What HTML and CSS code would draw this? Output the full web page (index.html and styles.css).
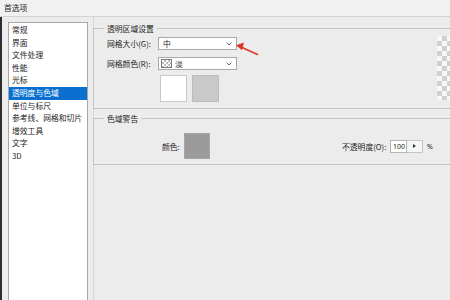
FILE: index.html
```html
<!DOCTYPE html>
<html lang="zh">
<head>
<meta charset="utf-8">
<title>首选项</title>
<link rel="stylesheet" href="styles.css">
</head>
<body>
<div class="window">
  <div class="titlebar">首选项</div>
  <div class="main">
    <ul class="nav">
      <li>常规</li>
      <li>界面</li>
      <li>文件处理</li>
      <li>性能</li>
      <li>光标</li>
      <li class="active">透明度与色域</li>
      <li>单位与标尺</li>
      <li>参考线、网格和切片</li>
      <li>增效工具</li>
      <li>文字</li>
      <li>3D</li>
    </ul>
    <div class="content">
      <fieldset class="group g1">
        <legend>透明区域设置</legend>
        <div class="g1-inner">
          <div class="form">
            <div class="row">
              <span class="label">网格大小(G):</span>
              <div class="select"><span class="val">中</span><svg class="chev" width="6" height="4" viewBox="0 0 6 4"><path d="M0.5 0.5 L3 3 L5.5 0.5" fill="none" stroke="#6a6a6a" stroke-width="1"/></svg></div>
            </div>
            <div class="row">
              <span class="label">网格颜色(R):</span>
              <div class="select"><span class="chk"></span><span class="val">淡</span><svg class="chev" width="6" height="4" viewBox="0 0 6 4"><path d="M0.5 0.5 L3 3 L5.5 0.5" fill="none" stroke="#6a6a6a" stroke-width="1"/></svg></div>
            </div>
            <div class="swatches">
              <div class="sw sw-white"></div>
              <div class="sw sw-gray"></div>
            </div>
          </div>
          <div class="preview"></div>
        </div>
      </fieldset>
      <fieldset class="group g2">
        <legend>色域警告</legend>
        <div class="g2-inner">
          <span class="color-label">颜色:</span>
          <div class="warn-swatch"></div>
          <span class="op-label">不透明度(O):</span>
          <div class="num">100</div>
          <div class="spin"><svg width="3" height="4" viewBox="0 0 3 4"><path d="M0 0 L3 2 L0 4 Z" fill="#333"/></svg></div>
          <span class="pct">%</span>
        </div>
      </fieldset>
    </div>
  </div>
  <svg class="arrow" width="450" height="300" viewBox="0 0 450 300">
    <line x1="241" y1="47" x2="257.5" y2="54.5" stroke="#d8382b" stroke-width="1.6" stroke-linecap="round"/>
    <polygon points="236,45.3 244,42.6 242,50.2" fill="#d8382b"/>
  </svg>
</div>
</body>
</html>
```

FILE: styles.css
```css
html, body {
  margin: 0;
  padding: 0;
}
body {
  width: 450px;
  height: 300px;
  overflow: hidden;
  background: #ececec;
  font-family: "Noto Sans CJK SC", "Noto Sans", sans-serif;
  font-size: 7.8px;
  color: #1c1c1c;
}
.window {
  position: relative;
  width: 450px;
  height: 300px;
}
.titlebar {
  height: 16px;
  line-height: 16px;
  padding-left: 4px;
  background: #f1f1f1;
  border-bottom: 1px solid #d4d4d4;
}
.main {
  display: flex;
  height: 283px;
  border-left: 2px solid #2e2e2e;
}
.nav {
  flex: 0 0 80px;
  list-style: none;
  margin: 5px 0 0 6px;
  padding: 1px 0 0 0;
  width: 80px;
  box-sizing: border-box;
  background: #fff;
  border: 1px solid #a6a6a6;
  border-bottom: none;
}
.nav li {
  line-height: 12.6px;
  height: 12.6px;
  padding-left: 3px;
  white-space: nowrap;
}
.nav li.active {
  background: #0b6fcf;
  color: #fff;
}
.content {
  margin-left: 5px;
  flex: 1;
  min-width: 0;
  border-left: 1px solid #d6d6d6;
}
.group {
  margin: 0 0 0 -1px;
  padding: 0;
  width: 357px;
  box-sizing: border-box;
  border: 1px solid #c4c4c4;
  border-right: none;
  min-inline-size: 0;
}
.group legend {
  margin-left: 10px;
  padding: 0 3px;
  line-height: 11px;
  height: 11px;
}
.g1 {
  margin-top: 6px;
}
.g1-inner {
  display: flex;
  padding: 3px 0 6px 13px;
}
.form {
  flex: 0 0 130px;
  display: flex;
  flex-direction: column;
  gap: 7px;
}
.row {
  display: flex;
  align-items: center;
}
.label {
  flex: 0 0 51px;
  white-space: nowrap;
}
.select {
  flex: 0 0 79px;
  height: 13px;
  box-sizing: border-box;
  background: #fff;
  border: 1px solid #a9a9a9;
  display: flex;
  align-items: center;
  padding: 0 4px 0 4px;
}
.select .val {
  flex: 1;
  line-height: 11px;
}
.chk {
  width: 9px;
  height: 7px;
  margin-left: -2px;
  margin-right: 3px;
  border: 1px solid #7a7a7a;
  background: repeating-conic-gradient(#bdbdbd 0 25%, #fff 0 50%) 0 0 / 4px 4px;
}
.chev {
  display: block;
}
.swatches {
  display: flex;
  gap: 5px;
  margin-top: -2px;
  margin-left: 53px;
}
.sw {
  width: 27px;
  height: 27px;
  box-sizing: border-box;
  border: 1px solid #c9c9c9;
}
.sw-white {
  background: #fff;
}
.sw-gray {
  background: #c9c9c9;
  border-color: #bdbdbd;
}
.preview {
  flex: 0 0 13px;
  margin-left: 200px;
  margin-top: -1px;
  height: 64px;
  background: repeating-conic-gradient(#d0d0d0 0 25%, #f7f7f7 0 50%) 0 0 / 10px 10px;
}
.g2 {
  margin-top: 4px;
}
.g2-inner {
  display: flex;
  align-items: center;
  padding: 9px 0 5px 68px;
}
.color-label {
  flex: 0 0 22px;
  white-space: nowrap;
}
.warn-swatch {
  flex: 0 0 26px;
  height: 26px;
  background: #9b9b9b;
  border: 1px solid #a6a6a6;
  box-sizing: border-box;
}
.op-label {
  margin-left: 132px;
  flex: 0 0 48px;
  white-space: nowrap;
}
.num {
  flex: 0 0 17px;
  height: 13px;
  box-sizing: border-box;
  background: #fff;
  border: 1px solid #b4b4b4;
  font-family: "Noto Sans", "Liberation Sans", sans-serif;
  font-size: 7px;
  line-height: 11px;
  padding-left: 2px;
}
.spin {
  flex: 0 0 16px;
  height: 13px;
  box-sizing: border-box;
  border: 1px solid #c4c4c4;
  border-left: none;
  background: #f6f6f6;
  display: flex;
  align-items: center;
  justify-content: center;
}
.spin svg {
  display: block;
}
.pct {
  margin-left: 4px;
  font-family: "Noto Sans", "Liberation Sans", sans-serif;
  font-size: 7px;
}
.arrow {
  position: absolute;
  left: 0;
  top: 0;
  pointer-events: none;
}
```
